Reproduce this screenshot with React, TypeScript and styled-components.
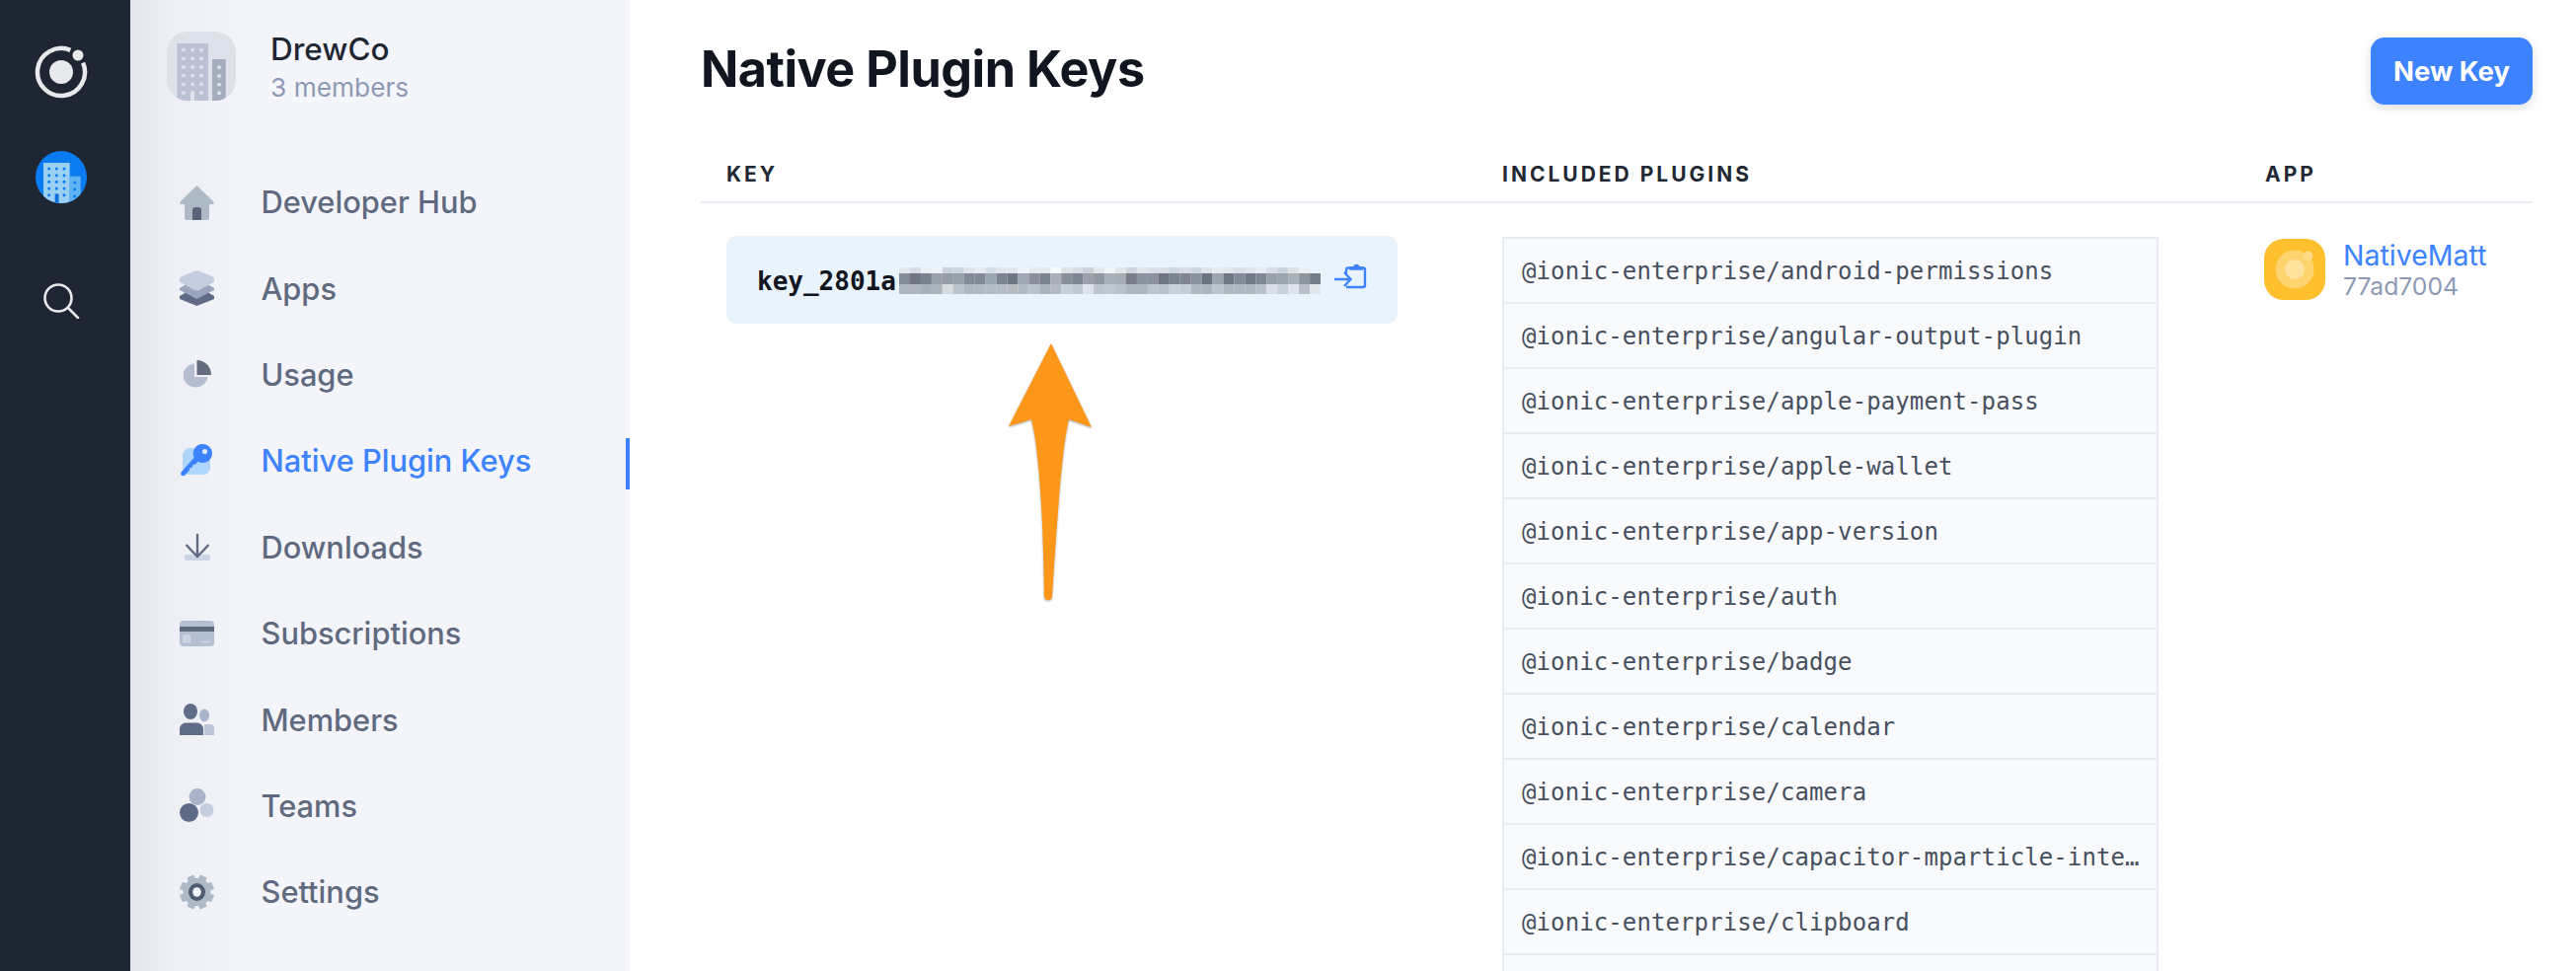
import React from 'react';
import styled, { createGlobalStyle } from 'styled-components';

const BLUE = '#3d82ff';
const SLATE = '#5f6a80';
const MONO = '"DejaVu Sans Mono", "Liberation Mono", monospace';

const GlobalStyle = createGlobalStyle`
  html, body {
    margin: 0;
    padding: 0;
    height: 100%;
    overflow: hidden;
    background: #ffffff;
    font-family: Inter, "Liberation Sans", sans-serif;
  }
  * {
    box-sizing: border-box;
  }
`;

// STYLED COMPONENTS

const Page = styled.div`
  display: flex;
  width: 2610px;
  height: 984px;
  overflow: hidden;
`;

const Rail = styled.aside`
  flex: 0 0 132px;
  display: flex;
  flex-direction: column;
  align-items: center;
  padding: 46px 8px 0 0;
  background: #1e2533;
`;

const RailAvatar = styled.div`
  margin-top: 53px;
  width: 52px;
  height: 53px;
  border-radius: 50%;
  overflow: hidden;
  background: #0a7bf0;
`;

const RailSearch = styled.div`
  margin-top: 81px;
  width: 38px;
  height: 36px;
`;

const Sidebar = styled.nav`
  flex: 0 0 506px;
  background: linear-gradient(90deg, #e5e6eb 0, #eeeff4 40px, #f4f5fa 120px);
`;

const OrgHeader = styled.div`
  display: flex;
  align-items: flex-start;
  gap: 35px;
  height: 102px;
  padding: 32px 0 0 37px;
`;

const OrgLogo = styled.div`
  width: 70px;
  height: 70px;
  border-radius: 21px;
  overflow: hidden;
  background: #dde1ea;
`;

const OrgName = styled.div`
  font-size: 31.5px;
  line-height: 38px;
  font-weight: 500;
  color: #1e2533;
  margin-top: -1px;
`;

const OrgMembers = styled.div`
  font-size: 26.3px;
  line-height: 40px;
  color: #8e9ab5;
`;

const NavList = styled.ul`
  list-style: none;
  margin: 59px 0 0;
  padding: 0;
`;

const NavRow = styled.li<{ $active?: boolean }>`
  position: relative;
  display: grid;
  grid-template-columns: 35px 1fr;
  column-gap: 47.5px;
  align-items: center;
  height: 87.4px;
  padding-left: 50px;
  font-size: 30.8px;
  font-weight: 500;
  color: ${(p) => (p.$active ? BLUE : SLATE)};

  &::after {
    content: '';
    display: ${(p) => (p.$active ? 'block' : 'none')};
    position: absolute;
    right: 0;
    top: 21px;
    width: 4px;
    height: 52px;
    background: ${BLUE};
  }
`;

const NavIconBox = styled.span`
  display: flex;
  align-items: center;
  justify-content: center;
  width: 35px;
`;

const Main = styled.main`
  flex: 1;
  padding: 0 44px 0 72px;
`;

const TitleBar = styled.header`
  display: flex;
  justify-content: space-between;
  align-items: flex-start;
  height: 160px;
  padding-top: 38px;
`;

const Title = styled.h1`
  margin: 0;
  font-size: 50.3px;
  line-height: 64px;
  font-weight: 700;
  letter-spacing: -0.5px;
  color: #10151f;
`;

const NewKeyButton = styled.button`
  width: 164px;
  height: 68px;
  border: none;
  border-radius: 14px;
  background: ${BLUE};
  color: #ffffff;
  font-family: inherit;
  font-size: 27.5px;
  font-weight: 700;
  box-shadow: 0 3px 10px rgba(30, 37, 51, 0.16);
`;

const TableGrid = styled.div`
  display: grid;
  grid-template-columns: 812px 773px 1fr;
`;

const HeadCell = styled.div<{ $inset?: boolean }>`
  height: 46px;
  padding: 6px 0 0 ${(p) => (p.$inset ? '26px' : '0')};
  border-bottom: 2px solid #e8ebf1;
  font-size: 21px;
  line-height: 22px;
  font-weight: 700;
  letter-spacing: 3px;
  color: #222834;
`;

const KeyCell = styled.div`
  position: relative;
  padding: 33px 0 0 26px;
`;

const KeyBox = styled.div`
  display: flex;
  align-items: center;
  width: 680px;
  height: 89px;
  padding: 0 31px;
  border-radius: 11px;
  background: #e8f3fc;
`;

const KeyText = styled.code`
  font-family: ${MONO};
  font-size: 26px;
  font-weight: 700;
  color: #10151f;
  margin-top: 2px;
`;

const KeyMosaic = styled.svg`
  display: block;
  margin: 2px 0 0 3px;
  filter: blur(0.5px);
`;

const CopyIcon = styled.svg`
  display: block;
  margin: 0 0 7px auto;
`;

const ArrowMark = styled.svg`
  position: absolute;
  left: 310px;
  top: 140px;
  filter: drop-shadow(0 1px 1px rgba(0, 0, 0, 0.35));
`;

const PluginsCell = styled.div`
  padding-top: 34px;
  padding-right: 108px;
`;

const PluginList = styled.ul`
  list-style: none;
  margin: 0;
  padding: 0;
  border: 2px solid #e9ebf2;
  border-bottom: none;
  background: #f9fafc;
`;

const PluginRow = styled.li`
  height: 66px;
  padding: 0 14px 0 18px;
  border-bottom: 2px solid #e9ebf2;
  font-family: ${MONO};
  font-size: 24px;
  letter-spacing: 0.1px;
  line-height: 67px;
  color: #47505f;
  white-space: nowrap;
  overflow: hidden;
  text-overflow: ellipsis;
`;

const AppCell = styled.div`
  display: flex;
  align-items: flex-start;
  gap: 18px;
  margin-left: -1px;
  padding-top: 36px;
`;

const AppIcon = styled.svg`
  display: block;
  flex: none;
`;

const AppName = styled.div`
  font-size: 28.5px;
  line-height: 34px;
  color: ${BLUE};
`;

const AppId = styled.div`
  font-size: 24.7px;
  line-height: 28px;
  color: #8e9ab5;
`;

// DRAWINGS

const IonicLogo = () => (
  <svg width="54" height="54" viewBox="0 0 54 54">
    <path d="M49.09 17.62A24 24 0 1 1 36.38 4.91" fill="none" stroke="#e8e9ea" strokeWidth="4.5" />
    <circle cx="27" cy="27" r="12" fill="#e8e9ea" />
    <circle cx="44" cy="10" r="5.5" fill="#e8e9ea" />
  </svg>
);

const RailBuilding = () => (
  <svg width="52" height="53" viewBox="36 152 52 53">
    <rect x="44" y="164" width="26.7" height="41" fill="#9bd0f5" />
    <rect x="70.7" y="177.7" width="11" height="28" fill="#5fb2f0" />
    {[170, 176.7, 183.3, 190, 196.7].flatMap((y) =>
      [49.7, 57.3, 65].map((x) => <circle key={`${x}-${y}`} cx={x} cy={y} r="1.5" fill="#0a7bf0" />)
    )}
    {[184, 191, 198].map((y) => (
      <circle key={y} cx="75.7" cy={y} r="1.5" fill="#0a7bf0" />
    ))}
    <rect x="55.7" y="195.7" width="3.8" height="10" fill="#0a6fd8" />
  </svg>
);

const OrgBuilding = () => (
  <svg width="70" height="70" viewBox="168 32 70 70">
    <rect x="178.3" y="44" width="31.7" height="58" fill="#b9c1d2" />
    <rect x="214" y="60" width="13.7" height="42" fill="#a3adbc" />
    {[50.7, 59.3, 68, 76.7, 85.3, 94].flatMap((y) =>
      [185, 194, 203].map((x) => <rect key={`${x}-${y}`} x={x - 1.7} y={y - 1.7} width="3.4" height="3.4" fill="#dfe3ec" />)
    )}
    {[68.3, 77, 85.7, 94.3].map((y) => (
      <rect key={y} x="219.3" y={y - 1.7} width="3.4" height="3.4" fill="#dfe3ec" />
    ))}
    <rect x="192" y="93" width="4" height="9" fill="#dfe3ec" />
  </svg>
);

const SearchGlyph = () => (
  <svg width="38" height="36" viewBox="0 0 38 36" fill="none" stroke="#e8e9ea" strokeWidth="2.6">
    <circle cx="16" cy="15" r="13.5" />
    <path d="M26 25L36 35" strokeLinecap="round" />
  </svg>
);

const HomeIcon = () => (
  <svg width="35" height="36" viewBox="0 0 35 36">
    <path d="M17.5 1L34.5 17.5V20H30V34a2 2 0 0 1-2 2H7a2 2 0 0 1-2-2V20H.5v-2.500Z" fill="#aebac6" />
    <path d="M13 26a3 3 0 0 1 3-3h3a3 3 0 0 1 3 3v10h-9Z" fill="#5b6478" />
  </svg>
);

const AppsIcon = () => (
  <svg width="35" height="36" viewBox="0 0 35 36">
    <path d="M0 26l17.500-10L35 26v3L17.500 36 0 29Z" fill="#5f6a85" />
    <path d="M0 18l17.500-10L35 18v2L17.500 29 0 20Z" fill="#9aa5bd" />
    <path d="M0 8.500C0 7.500 .5 7 1.500 6.500L15 .8c1.500-.7 3.500-.7 5 0l13.500 5.700c1 .5 1.500 1 1.500 2v2c0 1-.5 1.500-1.500 2L20 20c-1.500.7-3.500.7-5 0L1.500 12.500C.5 12 0 11.500 0 10.500Z" fill="#c5cde0" />
  </svg>
);

const UsageIcon = () => (
  <svg width="28" height="29" viewBox="0 0 28 29">
    <path d="M11 3.500V17h13.500A12.500 12 0 1 1 11 3.500Z" fill="#b5bed0" />
    <path d="M13.500 0C21.500 0 28 6.500 28 15H13.500Z" fill="#646c80" />
  </svg>
);

const KeyIcon = () => (
  <svg width="33" height="33" viewBox="0 0 33 33">
    <rect x="2" y="4" width="28" height="27" rx="7" fill="#aed6fa" />
    <path d="M22.500 0a9.500 9.500 0 1 1-4.800 17.700l-3 3-2.500 .3-.3 2.500-2.600 .4-.3 2.500-4.500 5.200c-1.200 1.300-4.400 1-4.400-1.500 0-.8 .3-1.500 .8-2L13.700 13.800A9.500 9.500 0 0 1 22.500 0Z" fill={BLUE} />
    <circle cx="24.500" cy="7.500" r="2.600" fill="#d5e8fd" />
  </svg>
);

const DownloadIcon = () => (
  <svg width="28" height="27" viewBox="0 0 28 27">
    <rect x="1" y="21" width="26" height="6" rx="2" fill="#cdd6e5" />
    <path d="M14 0V23M2.500 11L14 23 25.500 11" fill="none" stroke={SLATE} strokeWidth="2.400" />
  </svg>
);

const CardIcon = () => (
  <svg width="35" height="26" viewBox="0 0 35 26">
    <rect width="35" height="26" rx="4" fill="#b5bfd2" />
    <rect y="6" width="35" height="5" fill={SLATE} />
    <rect x="3" y="14" width="8.500" height="8.500" rx="1.500" fill="#ccd3e2" />
    <rect x="21.500" y="20.500" width="9.500" height="2" fill="#ccd3e2" />
  </svg>
);

const MembersIcon = () => (
  <svg width="35" height="32" viewBox="0 0 35 32">
    <ellipse cx="25" cy="12" rx="5" ry="6.500" fill="#aab5cd" />
    <path d="M25 21h6c2.500 0 4 1.500 4 4v7H25Z" fill="#bcc5da" />
    <ellipse cx="11" cy="8" rx="7" ry="8" fill="#5f6c88" />
    <path d="M0 32V26c0-4 3-6.500 7-6.500h10c4 0 7 2.500 7 6.500v6Z" fill="#5f6c88" />
  </svg>
);

const TeamsIcon = () => (
  <svg width="35" height="34" viewBox="0 0 35 34">
    <circle cx="18" cy="8.500" r="8.500" fill="#a9b4cc" />
    <circle cx="27.500" cy="22" r="7" fill="#c5cde0" />
    <circle cx="9.500" cy="24.500" r="9.500" fill="#5f6c88" />
  </svg>
);

const SettingsIcon = () => (
  <svg width="35" height="36" viewBox="-17.500 -18 35 36">
    <circle r="14" fill="#aebac8" />
    {[0, 45, 90, 135, 180, 225, 270, 315].map((deg) => (
      <rect key={deg} x="-4" y="-18" width="8" height="8" rx="1" fill="#aebac8" transform={`rotate(${deg + 22.5}) scale(0.97)`} />
    ))}
    <ellipse rx="8.500" ry="9" fill="#505a72" />
    <ellipse rx="4.300" ry="4.800" fill="#f2f4f8" />
  </svg>
);

const mosaicRows = [
  'e4e9ed d5dce3 e9eff3 eef3f6 c9d1da cdd5dd dde4ea e6edf2 d3dde6 e0e7ec e0e7ed eff5fa e5ebef e3e9ed f5fafd dde3e7 d7dde3 c9d0d8 e2e8ec f0f5f9 e0e6ea cfd7de dfe5e9 d8dfe6 d8dfe6 cfd7de d5dce3 cdd5dc dde4e8 e6edef e0e6ea d8dfe5 dfe5ea e6ecf1 d8dfe5 ccd4db dce3e8 e8eff5',
  '858d98 6f7783 79818c 98a0aa 959da8 98a0aa 828a96 828a96 9aa6b2 7b838f 6f7782 a0a8b4 8a919d 7a828d a8afb9 868e99 7d8590 9aa1ac 8f97a1 a8b0b9 a6aeb6 787f8b 8a929d 8a929d 6d7582 7b838f 7e8692 8a929d 6b7380 9aa5ae 6f7783 848c97 727a86 808894 99a1ab 9ca4ad a9b1b9 8d959f 757d89',
  'adb5be aeb6be a8b0ba abb3bd d5dde2 bac2cb b0b8c2 b0b8c2 b4bdc6 b4bcc5 b4bcc2 b2bac4 bac2cb a9b1bb b2bac4 c8d0d9 c0c8d0 dde3ea bcc4cc c0c8d0 bac2ca aeb6bf aeb6bf bcc4cc b8c0c9 c8d0d8 c4ccd4 b0b8c1 adb5be bcc4cd b0b8c1 b0b8c1 b0b8c1 b8c0c9 d8dfe6 c8d0d8 dce3ea b8c0c8 dfe6ec',
].map((row) => row.split(' '));

const rowGeometry = [
  { y: 0, h: 6 },
  { y: 6, h: 11 },
  { y: 17, h: 10 },
];

const plugins = [
  'android-permissions',
  'angular-output-plugin',
  'apple-payment-pass',
  'apple-wallet',
  'app-version',
  'auth',
  'badge',
  'calendar',
  'camera',
  'capacitor-mparticle-integration',
  'clipboard',
];

const navItems = [
  { label: 'Developer Hub', icon: <HomeIcon /> },
  { label: 'Apps', icon: <AppsIcon /> },
  { label: 'Usage', icon: <UsageIcon /> },
  { label: 'Native Plugin Keys', icon: <KeyIcon />, active: true },
  { label: 'Downloads', icon: <DownloadIcon /> },
  { label: 'Subscriptions', icon: <CardIcon /> },
  { label: 'Members', icon: <MembersIcon /> },
  { label: 'Teams', icon: <TeamsIcon /> },
  { label: 'Settings', icon: <SettingsIcon /> },
];

const App = () => (
  <Page>
    <GlobalStyle />
    <Rail>
      <IonicLogo />
      <RailAvatar>
        <RailBuilding />
      </RailAvatar>
      <RailSearch>
        <SearchGlyph />
      </RailSearch>
    </Rail>
    <Sidebar>
      <OrgHeader>
        <OrgLogo>
          <OrgBuilding />
        </OrgLogo>
        <div>
          <OrgName>DrewCo</OrgName>
          <OrgMembers>3 members</OrgMembers>
        </div>
      </OrgHeader>
      <NavList>
        {navItems.map((item) => (
          <NavRow key={item.label} $active={item.active}>
            <NavIconBox>{item.icon}</NavIconBox>
            {item.label}
          </NavRow>
        ))}
      </NavList>
    </Sidebar>
    <Main>
      <TitleBar>
        <Title>Native Plugin Keys</Title>
        <NewKeyButton>New Key</NewKeyButton>
      </TitleBar>
      <TableGrid>
        <HeadCell $inset>KEY</HeadCell>
        <HeadCell>INCLUDED PLUGINS</HeadCell>
        <HeadCell>APP</HeadCell>
        <KeyCell>
          <KeyBox>
            <KeyText>key_2801a</KeyText>
            <KeyMosaic width="427" height="27" viewBox="0 0 427 27">
              {mosaicRows.map((row, r) =>
                row.map((color, c) => (
                  <rect key={`${r}-${c}`} x={c * 10.95} y={rowGeometry[r].y} width="11" height={rowGeometry[r].h} fill={`#${color}`} />
                ))
              )}
            </KeyMosaic>
            <CopyIcon width="34" height="28" viewBox="0 0 34 28" fill="none" stroke={BLUE} strokeWidth="2.400">
              <path d="M1 17H17M11 10L17.500 17 11 24" />
              <path d="M13 11V7.500a2 2 0 0 1 2-2H30a2 2 0 0 1 2 2V23a2 2 0 0 1-2 2H13" />
              <path d="M17 7V5h4a2.500 2.500 0 0 1 5 0h3v2Z" fill={BLUE} strokeWidth="1.500" />
            </CopyIcon>
          </KeyBox>
          <ArrowMark width="88" height="268" viewBox="0 0 88 268">
            <path d="M45 2L86 87 63 79C57 105 53 150 46 258A4 4 0 0 1 38 258C37 190 34 115 25 79L2 86Z" fill="#fd971a" />
          </ArrowMark>
        </KeyCell>
        <PluginsCell>
          <PluginList>
            {plugins.map((name) => (
              <PluginRow key={name}>@ionic-enterprise/{name}</PluginRow>
            ))}
            <PluginRow />
          </PluginList>
        </PluginsCell>
        <AppCell>
          <AppIcon width="62" height="62" viewBox="0 0 62 62">
            <rect width="62" height="62" rx="20" fill="#ffc02e" />
            <circle cx="31" cy="31" r="19.500" fill="#ffd36e" />
            <circle cx="31" cy="31" r="10" fill="#ffe29e" />
            <circle cx="44.500" cy="17.500" r="5" fill="#ffdc85" />
          </AppIcon>
          <div>
            <AppName>NativeMatt</AppName>
            <AppId>77ad7004</AppId>
          </div>
        </AppCell>
      </TableGrid>
    </Main>
  </Page>
);

export default App;
